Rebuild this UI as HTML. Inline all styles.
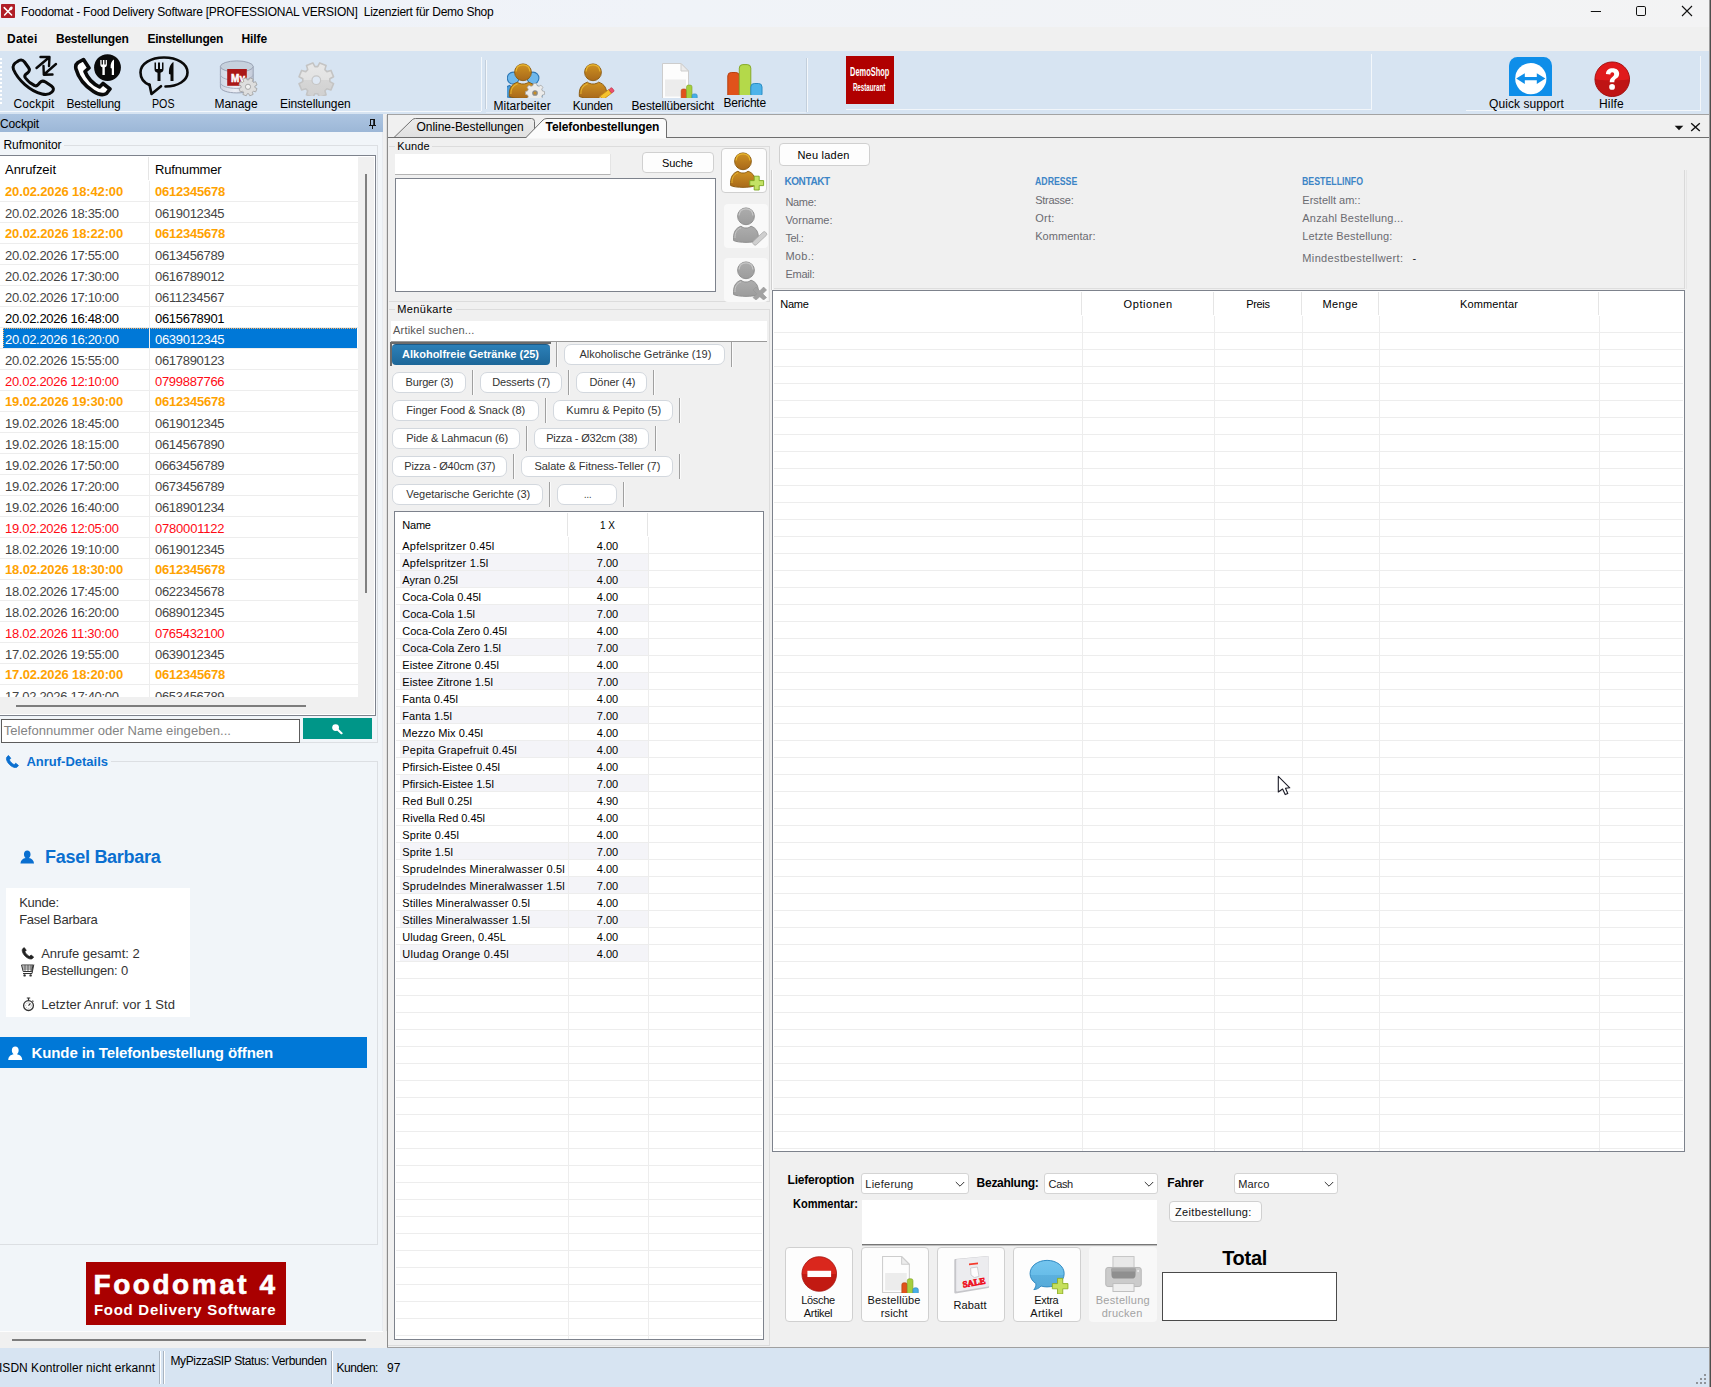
<!DOCTYPE html>
<html><head><meta charset="utf-8"><title>Foodomat</title><style>
html,body{margin:0;padding:0}
body{width:1711px;height:1387px;overflow:hidden;position:relative;background:#f0f0f0;font-family:"Liberation Sans",sans-serif;font-size:12px}
#r div,#r span,#r svg{position:absolute;box-sizing:border-box}
#r span{white-space:pre}
#r{position:absolute;left:0;top:0;width:1711px;height:1387px;overflow:hidden}
</style></head><body><div id="r">
<div style="left:0px;top:0px;width:1711px;height:27px;background:linear-gradient(90deg,#eef2f9 0%,#f0f3f8 40%,#f3f3f4 100%)"></div>
<div style="left:0px;top:27px;width:1711px;height:24px;background:#f0f0f0"></div>
<div style="left:0px;top:51px;width:1709px;height:63px;background:#d7e4f2"></div>
<div style="left:0px;top:111px;width:481px;height:1px;background:#f4f8fc"></div>
<div style="left:486px;top:112px;width:320px;height:1px;background:#e6eef7"></div>
<svg style="left:1px;top:4px" width="14" height="14" viewBox="0 0 14 14"><rect width="14" height="14" rx=".8" fill="#b01e27"/><path d="M3.2 3.6 L10.6 11 M10.2 4 L3.6 11" stroke="#fff" stroke-width="1.5" stroke-linecap="round"/><ellipse cx="9.9" cy="4.4" rx="1.5" ry="2.1" transform="rotate(42 9.9 4.4)" fill="#fff"/></svg>
<span style="left:21.00px;top:4.00px;font-size:12px;line-height:17px;color:#000;letter-spacing:-0.235px;">Foodomat - Food Delivery Software [PROFESSIONAL VERSION]  Lizenziert für Demo Shop</span>
<svg style="left:1590px;top:0" width="110" height="24" viewBox="0 0 110 24"><path d="M0.8 11.5 H11" stroke="#111" stroke-width="1"/><rect x="46.5" y="6.5" width="9" height="9" rx="1.3" fill="none" stroke="#111" stroke-width="1"/><path d="M92 6 L102 16 M102 6 L92 16" stroke="#111" stroke-width="1.1"/></svg>
<span style="left:7.00px;top:31.00px;font-size:12px;line-height:17px;color:#000;font-weight:700;letter-spacing:0.231px;">Datei</span>
<span style="left:56.00px;top:31.00px;font-size:12px;line-height:17px;color:#000;font-weight:700;letter-spacing:-0.238px;">Bestellungen</span>
<span style="left:147.50px;top:31.00px;font-size:12px;line-height:17px;color:#000;font-weight:700;letter-spacing:-0.245px;">Einstellungen</span>
<span style="left:241.50px;top:31.00px;font-size:12px;line-height:17px;color:#000;font-weight:700;letter-spacing:-0.103px;">Hilfe</span>
<div style="left:1709px;top:0px;width:1px;height:1387px;background:#9c9c9c"></div>
<div style="left:1710px;top:0px;width:1px;height:1387px;background:#4d4d4d"></div>
<div style="left:0px;top:58px;width:1.5px;height:2px;background:#fff"></div>
<div style="left:0px;top:62px;width:1.5px;height:2px;background:#fff"></div>
<div style="left:0px;top:66px;width:1.5px;height:2px;background:#fff"></div>
<div style="left:0px;top:70px;width:1.5px;height:2px;background:#fff"></div>
<div style="left:0px;top:74px;width:1.5px;height:2px;background:#fff"></div>
<div style="left:0px;top:78px;width:1.5px;height:2px;background:#fff"></div>
<div style="left:0px;top:82px;width:1.5px;height:2px;background:#fff"></div>
<div style="left:0px;top:86px;width:1.5px;height:2px;background:#fff"></div>
<div style="left:0px;top:90px;width:1.5px;height:2px;background:#fff"></div>
<div style="left:0px;top:94px;width:1.5px;height:2px;background:#fff"></div>
<div style="left:0px;top:98px;width:1.5px;height:2px;background:#fff"></div>
<div style="left:0px;top:102px;width:1.5px;height:2px;background:#fff"></div>
<svg style="left:8px;top:54px" width="52" height="44" viewBox="0 0 52 44">
<path d="M9.5 7.5 C12 5.5 14.5 5.5 16.5 8 L20.5 13.5 C22 15.5 21.5 17.5 19.5 19 L17.5 20.5 C16.5 21.5 16.5 22.5 17.5 24 C20 27.5 23 30 26.5 31.5 C28 32.2 29 32 30 30.8 L32 28.5 C33.5 26.8 35.5 26.8 37.5 28 L43.5 32 C46 33.8 46 36 44 38 C41.5 40.5 38 41 34 40 C22 37 10 26 5.5 15.5 C4.2 12 5.5 9.5 9.5 7.5 Z" fill="none" stroke="#0a0a0a" stroke-width="3" stroke-linejoin="round"/>
<path d="M28.5 14 L41 3.5 M32.5 3 L41.5 3 L41 12" fill="none" stroke="#0a0a0a" stroke-width="2.4" stroke-linecap="round" stroke-linejoin="round"/>
<path d="M48 10 L36 20.5 M35.5 12 L35.8 20.8 L44.5 20.5" fill="none" stroke="#0a0a0a" stroke-width="2.4" stroke-linecap="round" stroke-linejoin="round"/>
</svg>
<span style="left:13.50px;top:96.00px;font-size:12px;line-height:17px;color:#000;letter-spacing:0.141px;">Cockpit</span>
<svg style="left:70px;top:54px" width="54" height="44" viewBox="0 0 54 44">
<path d="M8 8.5 L13.5 5.5 L19 14 L15 17.5 C17.5 24 22.5 29.5 29.5 33 L33 29.5 L40 35 L36.5 39.5 C33 41.5 28 40.5 23.5 37.5 C15 32 8.5 24 6 15 C5.2 12 6 10 8 8.5 Z" fill="#fff" stroke="#0a0a0a" stroke-width="3.6" stroke-linejoin="round"/>
<circle cx="37.5" cy="13.6" r="13.4" fill="#0a0a0a"/>
<g transform="translate(0,-2.6)"><path d="M30.3 8.5 V13 C30.3 15 31.3 15.6 32.4 15.8 V23.5 H34.8 V15.8 C35.9 15.6 36.9 15 36.9 13 V8.5 H35.7 V13 H34.4 V8.5 H32.9 V13 H31.6 V8.5 Z" fill="#fff"/>
<path d="M44 8.2 C41.5 9.5 40.4 12.5 40.6 16.5 L41.8 17 V23.5 H44 Z" fill="#fff"/></g>
</svg>
<span style="left:66.50px;top:96.00px;font-size:12px;line-height:17px;color:#000;letter-spacing:-0.205px;">Bestellung</span>
<svg style="left:138px;top:52.5px" width="52" height="44" viewBox="0 0 52 44">
<path d="M11.5 32 C5.5 29.5 2.5 24.5 2.5 19.5 C2.5 10.5 13 4.5 26 4.5 C39 4.5 49.5 10.5 49.5 19.5 C49.5 27.5 40 33.5 27.5 33.5" fill="none" stroke="#0a0a0a" stroke-width="2.6" stroke-linecap="round"/>
<path d="M11.5 31.5 L13.5 41 L23 33.2" fill="none" stroke="#0a0a0a" stroke-width="2.6" stroke-linejoin="round" stroke-linecap="round"/>
<path d="M16.5 9.5 V16 C16.5 18.6 18 19.4 19.5 19.7 V28 H22.5 V19.7 C24 19.4 25.5 18.6 25.5 16 V9.5 H24 V16 H22 V9.5 H20 V16 H18 V9.5 Z" fill="#0a0a0a"/>
<path d="M35.5 9 C32 11 30.5 15.5 31 21 L32.5 21.6 V28 H35.5 Z" fill="#0a0a0a"/>
</svg>
<span style="left:152.00px;top:96.00px;font-size:12px;line-height:17px;color:#000;transform:scaleX(0.8878);transform-origin:0 50%;">POS</span>
<svg style="left:218px;top:59px" width="42" height="38" viewBox="0 0 42 38">
<defs><linearGradient id="dbg" x1="0" x2="1"><stop offset="0" stop-color="#cfd5e2"/><stop offset=".45" stop-color="#eceff6"/><stop offset="1" stop-color="#c3cad9"/></linearGradient></defs>
<path d="M2.4 7.5 V28 C2.4 31.5 9.7 33.9 18.8 33.9 C27.9 33.9 35.2 31.5 35.2 28 V7.5 Z" fill="url(#dbg)" stroke="#9ba4b6" stroke-width="1"/>
<path d="M2.4 15.5 C2.4 19 9.7 21.4 18.8 21.4 C27.9 21.4 35.2 19 35.2 15.5 M2.4 23.5 C2.4 27 9.7 29.4 18.8 29.4 C27.9 29.4 35.2 27 35.2 23.5" fill="none" stroke="#a7afc0" stroke-width="1"/>
<ellipse cx="18.8" cy="7.5" rx="16.4" ry="5.6" fill="#c6d1dd" stroke="#9ba4b6" stroke-width="1"/>
<rect x="9.2" y="10" width="19.6" height="16.8" fill="#aa1717"/>
<text x="20" y="23" font-family="Liberation Sans" font-weight="700" font-size="10" fill="#fff" stroke="#fff" stroke-width=".5" text-anchor="middle">My</text>
<g transform="translate(30,27.8)"><path d="M0.70 -6.86 L1.79 -9.02 L5.11 -7.65 L4.36 -5.35 L5.35 -4.36 L7.65 -5.11 L9.02 -1.79 L6.86 -0.70 L6.86 0.70 L9.02 1.79 L7.65 5.11 L5.35 4.36 L4.36 5.35 L5.11 7.65 L1.79 9.02 L0.70 6.86 L-0.70 6.86 L-1.79 9.02 L-5.11 7.65 L-4.36 5.35 L-5.35 4.36 L-7.65 5.11 L-9.02 1.79 L-6.86 0.70 L-6.86 -0.70 L-9.02 -1.79 L-7.65 -5.11 L-5.35 -4.36 L-4.36 -5.35 L-5.11 -7.65 L-1.79 -9.02 L-0.70 -6.86 Z" fill="#dedede" stroke="#a5a5a5" stroke-width=".9" stroke-linejoin="round"/><circle cx="0" cy="0" r="2.6" fill="#f3f3f3" stroke="#a9a9a9" stroke-width="1"/></g>
</svg>
<span style="left:214.50px;top:96.00px;font-size:12px;line-height:17px;color:#000;letter-spacing:-0.062px;">Manage</span>
<div style="left:296px;top:60px;width:42px;height:35.6px;overflow:hidden"><svg style="left:0;top:0" width="42" height="42" viewBox="-20.3 -20.2 42 42">
<defs><linearGradient id="gg" x1="0" y1="0" x2="0" y2="1"><stop offset="0" stop-color="#e8e8e8"/><stop offset=".5" stop-color="#e2e2e2"/><stop offset=".5" stop-color="#d6d6d6"/><stop offset="1" stop-color="#d0d0d0"/></linearGradient></defs>
<path d="M1.39 -13.53 L3.43 -17.26 L9.78 -14.63 L8.59 -10.55 L10.55 -8.59 L14.63 -9.78 L17.26 -3.43 L13.53 -1.39 L13.53 1.39 L17.26 3.43 L14.63 9.78 L10.55 8.59 L8.59 10.55 L9.78 14.63 L3.43 17.26 L1.39 13.53 L-1.39 13.53 L-3.43 17.26 L-9.78 14.63 L-8.59 10.55 L-10.55 8.59 L-14.63 9.78 L-17.26 3.43 L-13.53 1.39 L-13.53 -1.39 L-17.26 -3.43 L-14.63 -9.78 L-10.55 -8.59 L-8.59 -10.55 L-9.78 -14.63 L-3.43 -17.26 L-1.39 -13.53 Z" fill="url(#gg)" stroke="#c4c4c4" stroke-width="1.6" stroke-linejoin="round"/>
<circle cx="0" cy="0" r="4.3" fill="#dfe8f3" stroke="#c6c6c6" stroke-width="1.2"/>
</svg></div>
<span style="left:280.00px;top:96.00px;font-size:12px;line-height:17px;color:#000;letter-spacing:-0.120px;">Einstellungen</span>
<div style="left:481px;top:57px;width:1px;height:54px;background:#f3f7fb"></div>
<div style="left:485px;top:60px;width:1px;height:49px;background:#c3cfdc"></div>
<div style="left:486px;top:60px;width:1px;height:49px;background:#f3f7fb"></div>
<div style="left:500px;top:61px;width:50px;height:36.7px;overflow:hidden"><svg style="left:7px;top:2.3px" width="40" height="43.50" viewBox="0 0 40 43.5">
<defs><linearGradient id="pg1" x1="0" y1="0" x2="0" y2="1"><stop offset="0" stop-color="#cf9222"/><stop offset="1" stop-color="#a8691a"/></linearGradient></defs>
<g transform="translate(6.2,8.2) scale(0.74)"><path d="M-12.4 33.5 C-13 25.5 -10.5 21 -5 19.2 C-2.5 21.6 2.5 21.6 5 19.2 C10.5 21 13 25.5 12.4 33.5 C8 36 -8 36 -12.4 33.5 Z" fill="#4a9ad8" stroke="#2e78b6" stroke-width="1.5"/><circle cx="0" cy="9.3" r="8" fill="#6fb8ec" stroke="#2e78b6" stroke-width="1.5"/></g><g transform="translate(26,8.2) scale(0.74)"><path d="M-12.4 33.5 C-13 25.5 -10.5 21 -5 19.2 C-2.5 21.6 2.5 21.6 5 19.2 C10.5 21 13 25.5 12.4 33.5 C8 36 -8 36 -12.4 33.5 Z" fill="#4a9ad8" stroke="#2e78b6" stroke-width="1.5"/><circle cx="0" cy="9.3" r="8" fill="#6fb8ec" stroke="#2e78b6" stroke-width="1.5"/></g><g transform="translate(16,0) scale(1.1,1) translate(-16,0)"><path d="M3.6 33.5 C3 25.5 5.5 21 11 19.2 C13.5 21.6 18.5 21.6 21 19.2 C26.5 21 29 25.5 28.4 33.5 C24 36 8 36 3.6 33.5 Z" fill="url(#pg1)" stroke="#8a5a10" stroke-width=".9"/>
<path d="M5 31 C4.8 26 6.5 22.6 11 20.8" fill="none" stroke="#e6b52e" stroke-width="1"/></g>
<circle cx="16" cy="9.3" r="8.4" fill="url(#pg1)" stroke="#8a5a10" stroke-width=".9"/>
<path d="M9 8.5 C9.4 3.5 13 1.8 16 1.8 C19 1.8 22.6 3.5 23 8.5" fill="none" stroke="#e6b52e" stroke-width="1.3"/>
<g transform="translate(28,28.8)"><path d="M-1.6 -9.4 H1.6 L2.3 -7 L4.4 -6.1 L6.6 -7.4 L8.8 -5 L7.5 -2.9 L8.3 -0.9 L10.6 -0.3 V2.9 L8.3 3.5 L7.5 5.5 L8.8 7.6 L6.6 10 L4.4 8.7 L2.3 9.6 L1.6 12 H-1.6 L-2.3 9.6 L-4.4 8.7 L-6.6 10 L-8.8 7.6 L-7.5 5.5 L-8.3 3.5 L-10.6 2.9 V-0.3 L-8.3 -0.9 L-7.5 -2.9 L-8.8 -5 L-6.6 -7.4 L-4.4 -6.1 L-2.3 -7 Z" fill="#ebebeb" stroke="#a0a0a0" stroke-width=".8" transform="scale(.9)"/><circle cx="0" cy="1.2" r="2.2" fill="#c98d24" stroke="#8a8a8a" stroke-width="1.3"/></g></svg></div>
<span style="left:493.40px;top:98.00px;font-size:12px;line-height:17px;color:#000;letter-spacing:0.065px;">Mitarbeiter</span>
<div style="left:570px;top:61px;width:50px;height:36.7px;overflow:hidden"><svg style="left:6.5px;top:2.3px" width="44" height="43.50" viewBox="0 0 44 43.5">
<defs><linearGradient id="pg2" x1="0" y1="0" x2="0" y2="1"><stop offset="0" stop-color="#cf9222"/><stop offset="1" stop-color="#a8691a"/></linearGradient></defs>
<g transform="translate(16,0) scale(1.1,1) translate(-16,0)"><path d="M3.6 33.5 C3 25.5 5.5 21 11 19.2 C13.5 21.6 18.5 21.6 21 19.2 C26.5 21 29 25.5 28.4 33.5 C24 36 8 36 3.6 33.5 Z" fill="url(#pg2)" stroke="#8a5a10" stroke-width=".9"/>
<path d="M5 31 C4.8 26 6.5 22.6 11 20.8" fill="none" stroke="#e6b52e" stroke-width="1"/></g>
<circle cx="16" cy="9.3" r="8.4" fill="url(#pg2)" stroke="#8a5a10" stroke-width=".9"/>
<path d="M9 8.5 C9.4 3.5 13 1.8 16 1.8 C19 1.8 22.6 3.5 23 8.5" fill="none" stroke="#e6b52e" stroke-width="1.3"/>
<g transform="translate(23.6,35.6) rotate(-37)"><rect x="1" y="-2.3" width="11" height="4.6" fill="#f6c22c" stroke="#c48a12" stroke-width=".7"/><path d="M1 -2.3 L-3.4 0 L1 2.3 Z" fill="#f5deb0" stroke="#c48a12" stroke-width=".5"/><rect x="12" y="-2.3" width="3.6" height="4.6" rx="1" fill="#ee4f6a" stroke="#b92f48" stroke-width=".6"/></g></svg></div>
<span style="left:572.70px;top:98.00px;font-size:12px;line-height:17px;color:#000;letter-spacing:-0.213px;">Kunden</span>
<div style="left:660px;top:62.3px;width:42px;height:35.7px;overflow:hidden"><svg style="left:0px;top:0px" width="40.0" height="37.0" viewBox="0 0 40 37">
<path d="M2.5 1.5 H21 L28.5 9 V36.5 H2.5 Z" fill="#fdfdfd" stroke="#cdcdcd" stroke-width="1"/>
<path d="M21 1.5 V9 H28.5 Z" fill="#ececec" stroke="#cdcdcd" stroke-width="1" stroke-linejoin="round"/>
<rect x="5" y="17.5" width="21" height="17" fill="#ececec"/>
<rect x="21.2" y="27" width="5.3" height="12" rx="1.8" fill="#e0521b" stroke="#b03d0f" stroke-width=".6"/>
<rect x="26.5" y="23.1" width="5.5" height="16" rx="1.8" fill="#a5cf3e" stroke="#7ea125" stroke-width=".6"/>
<rect x="32" y="31.9" width="5.2" height="7" rx="1.8" fill="#48aee6" stroke="#2a86bd" stroke-width=".6"/>
</svg></div>
<span style="left:631.50px;top:98.00px;font-size:12px;line-height:17px;color:#000;letter-spacing:-0.139px;">Bestellübersicht</span>
<svg style="left:726px;top:62px" width="38" height="34" viewBox="0 0 38 34">
<rect x="1.8" y="10.5" width="11.5" height="27" rx="3.5" fill="#e0521b" stroke="#b8410f" stroke-width="1"/>
<rect x="13.3" y="2.6" width="11.5" height="34" rx="3.5" fill="#b4d94a" stroke="#86aa2a" stroke-width="1"/>
<rect x="24.8" y="21.5" width="11.2" height="14" rx="3.5" fill="#4db3ea" stroke="#2b8cc4" stroke-width="1"/>
</svg>
<div style="left:724px;top:95px;width:44px;height:3px;background:#d7e4f2"></div>
<span style="left:723.50px;top:95.00px;font-size:12px;line-height:17px;color:#000;letter-spacing:-0.191px;">Berichte</span>
<div style="left:806px;top:58px;width:1px;height:54px;background:#c3cfdc"></div>
<div style="left:807px;top:58px;width:1px;height:54px;background:#f3f7fb"></div>
<div style="left:846px;top:56px;width:48px;height:48px;background:#b00000"></div>
<span style="left:838.33px;top:64.00px;font-size:12px;line-height:17px;color:#fff;font-weight:700;transform:scaleX(0.6188);transform-origin:50% 50%;">DemoShop</span>
<span style="left:843.08px;top:81.00px;font-size:10px;line-height:14px;color:#fff;font-weight:700;transform:scaleX(0.6220);transform-origin:50% 50%;">Restaurant</span>
<div style="left:1371px;top:54px;width:1px;height:56px;background:#f3f7fb"></div>
<div style="left:846px;top:109px;width:526px;height:1px;background:#f1f5fa"></div>
<div style="left:1700px;top:56px;width:1px;height:54px;background:#f3f7fb"></div>
<div style="left:1466px;top:110px;width:235px;height:1px;background:#f3f7fb"></div>
<svg style="left:1508.5px;top:57px" width="43" height="39" viewBox="0 0 43 39">
<rect x="0" y="0" width="43" height="46" rx="8.5" fill="#0e8ee9"/>
<circle cx="21.8" cy="21.6" r="15.6" fill="#fff"/>
<path d="M7.2 21.6 L15.8 16.2 V19.9 H27.8 V16.2 L36.4 21.6 L27.8 27 V23.3 H15.8 V27 Z" fill="#0e8ee9"/>
</svg>
<span style="left:1489.00px;top:96.00px;font-size:12px;line-height:17px;color:#000;letter-spacing:0.073px;">Quick support</span>
<svg style="left:1593.5px;top:60.5px" width="36.5" height="36.5" viewBox="0 0 38 38">
<circle cx="19" cy="19" r="18" fill="#bf1414" stroke="#9e1010" stroke-width="1"/>
<path d="M1.5 19 A17.5 17.5 0 0 1 36.5 19 C30 20.5 8 20.5 1.5 19 Z" fill="#e01a1c"/>
<path d="M12.4 13.6 C12.6 9.6 15.4 7.6 19.3 7.6 C23.4 7.6 26.2 9.9 26.2 13.2 C26.2 16 24.6 17.3 22.8 18.6 C21.5 19.6 21.2 20.3 21.2 22 H16.4 C16.3 19.3 17.2 18 18.8 16.8 C20.2 15.8 21 15 21 13.7 C21 12.4 20.2 11.7 19.1 11.7 C17.8 11.7 17.1 12.5 17 14 Z" fill="#fff"/>
<circle cx="18.8" cy="27" r="3" fill="#fff"/>
</svg>
<span style="left:1599.00px;top:96.00px;font-size:12px;line-height:17px;color:#000;letter-spacing:0.197px;">Hilfe</span>
<div style="left:0px;top:114px;width:382px;height:1217px;background:#f1f5f9"></div>
<div style="left:382px;top:114px;width:1px;height:1234px;background:#e7ebf0"></div>
<div style="left:383px;top:114px;width:4px;height:1234px;background:#f0f0f0"></div>
<div style="left:386px;top:115px;width:1px;height:1216px;background:#dedede"></div>
<div style="left:0px;top:114px;width:383px;height:18px;background:linear-gradient(#adc5e1,#9cb7d7)"></div>
<span style="left:0.00px;top:116.00px;font-size:12px;line-height:17px;color:#000;letter-spacing:-0.145px;">Cockpit</span>
<svg style="left:369px;top:119px" width="7" height="10" viewBox="0 0 7 10"><path d="M1 0.5 H6 M1.5 0 V6 M5 0 V6 M0 6.5 H7 M3.5 7 V10" stroke="#111" stroke-width="1" fill="none"/><rect x="4.5" y="0" width="1.5" height="6" fill="#111"/></svg>
<span style="left:3.50px;top:137.00px;font-size:12px;line-height:17px;color:#000;letter-spacing:-0.069px;">Rufmonitor</span>
<div style="left:64px;top:145px;width:313px;height:1px;background:#dcdfe3"></div>
<div style="left:377px;top:145px;width:1px;height:598px;background:#dcdfe3"></div>
<div style="left:300px;top:742px;width:78px;height:1px;background:#dcdfe3"></div>
<div style="left:0px;top:155px;width:376px;height:561px;background:#fff;border:1px solid #7d828c;border-left:0"></div>
<div style="left:358px;top:157px;width:16px;height:557px;background:#f0f0f0"></div>
<div style="left:0px;top:697px;width:374px;height:17px;background:#f0f0f0"></div>
<span style="left:5.00px;top:161.00px;font-size:13px;line-height:18px;color:#000;letter-spacing:-0.035px;">Anrufzeit</span>
<span style="left:155.00px;top:161.00px;font-size:13px;line-height:18px;color:#000;letter-spacing:-0.158px;">Rufnummer</span>
<div style="left:148px;top:157px;width:1px;height:23px;background:#e5e5e5"></div>
<div style="left:0;top:156px;width:358px;height:541px;overflow:hidden">
<div style="left:0px;top:45px;width:358px;height:1px;background:#ededed"></div>
<span style="left:5.00px;top:27.00px;font-size:13px;line-height:18px;color:#ffa200;font-weight:700;letter-spacing:-0.143px;">20.02.2026 18:42:00</span>
<span style="left:155.00px;top:27.00px;font-size:13px;line-height:18px;color:#ffa200;font-weight:700;letter-spacing:-0.231px;">0612345678</span>
<div style="left:0px;top:66px;width:358px;height:1px;background:#ededed"></div>
<span style="left:5.00px;top:49.00px;font-size:13px;line-height:18px;color:#444;letter-spacing:-0.294px;">20.02.2026 18:35:00</span>
<span style="left:155.00px;top:49.00px;font-size:13px;line-height:18px;color:#444;letter-spacing:-0.301px;">0619012345</span>
<div style="left:0px;top:87px;width:358px;height:1px;background:#ededed"></div>
<span style="left:5.00px;top:69.00px;font-size:13px;line-height:18px;color:#ffa200;font-weight:700;letter-spacing:-0.143px;">20.02.2026 18:22:00</span>
<span style="left:155.00px;top:69.00px;font-size:13px;line-height:18px;color:#ffa200;font-weight:700;letter-spacing:-0.231px;">0612345678</span>
<div style="left:0px;top:108px;width:358px;height:1px;background:#ededed"></div>
<span style="left:5.00px;top:91.00px;font-size:13px;line-height:18px;color:#444;letter-spacing:-0.294px;">20.02.2026 17:55:00</span>
<span style="left:155.00px;top:91.00px;font-size:13px;line-height:18px;color:#444;letter-spacing:-0.301px;">0613456789</span>
<div style="left:0px;top:129px;width:358px;height:1px;background:#ededed"></div>
<span style="left:5.00px;top:112.00px;font-size:13px;line-height:18px;color:#444;letter-spacing:-0.294px;">20.02.2026 17:30:00</span>
<span style="left:155.00px;top:112.00px;font-size:13px;line-height:18px;color:#444;letter-spacing:-0.301px;">0616789012</span>
<div style="left:0px;top:150px;width:358px;height:1px;background:#ededed"></div>
<span style="left:5.00px;top:133.00px;font-size:13px;line-height:18px;color:#444;letter-spacing:-0.294px;">20.02.2026 17:10:00</span>
<span style="left:155.00px;top:133.00px;font-size:13px;line-height:18px;color:#444;letter-spacing:-0.204px;">0611234567</span>
<div style="left:0px;top:171px;width:358px;height:1px;background:#ededed"></div>
<span style="left:5.00px;top:154.00px;font-size:13px;line-height:18px;color:#000;letter-spacing:-0.294px;">20.02.2026 16:48:00</span>
<span style="left:155.00px;top:154.00px;font-size:13px;line-height:18px;color:#000;letter-spacing:-0.301px;">0615678901</span>
<div style="left:3px;top:172px;width:354px;height:20px;background:#0078d7"></div>
<div style="left:3px;top:172px;width:354px;height:1px;background:repeating-linear-gradient(90deg,#ffb060 0 1px,#0078d7 1px 2px)"></div>
<div style="left:3px;top:172px;width:1px;height:20px;background:repeating-linear-gradient(180deg,#ffb060 0 1px,#0078d7 1px 2px)"></div>
<div style="left:0px;top:192px;width:358px;height:1px;background:#ededed"></div>
<span style="left:5.00px;top:175.00px;font-size:13px;line-height:18px;color:#fff;letter-spacing:-0.294px;">20.02.2026 16:20:00</span>
<span style="left:155.00px;top:175.00px;font-size:13px;line-height:18px;color:#fff;letter-spacing:-0.301px;">0639012345</span>
<div style="left:0px;top:213px;width:358px;height:1px;background:#ededed"></div>
<span style="left:5.00px;top:196.00px;font-size:13px;line-height:18px;color:#444;letter-spacing:-0.294px;">20.02.2026 15:55:00</span>
<span style="left:155.00px;top:196.00px;font-size:13px;line-height:18px;color:#444;letter-spacing:-0.301px;">0617890123</span>
<div style="left:0px;top:234px;width:358px;height:1px;background:#ededed"></div>
<span style="left:5.00px;top:217.00px;font-size:13px;line-height:18px;color:#ff0a14;letter-spacing:-0.294px;">20.02.2026 12:10:00</span>
<span style="left:155.00px;top:217.00px;font-size:13px;line-height:18px;color:#ff0a14;letter-spacing:-0.301px;">0799887766</span>
<div style="left:0px;top:255px;width:358px;height:1px;background:#ededed"></div>
<span style="left:5.00px;top:237.00px;font-size:13px;line-height:18px;color:#ffa200;font-weight:700;letter-spacing:-0.143px;">19.02.2026 19:30:00</span>
<span style="left:155.00px;top:237.00px;font-size:13px;line-height:18px;color:#ffa200;font-weight:700;letter-spacing:-0.231px;">0612345678</span>
<div style="left:0px;top:276px;width:358px;height:1px;background:#ededed"></div>
<span style="left:5.00px;top:259.00px;font-size:13px;line-height:18px;color:#444;letter-spacing:-0.294px;">19.02.2026 18:45:00</span>
<span style="left:155.00px;top:259.00px;font-size:13px;line-height:18px;color:#444;letter-spacing:-0.301px;">0619012345</span>
<div style="left:0px;top:297px;width:358px;height:1px;background:#ededed"></div>
<span style="left:5.00px;top:280.00px;font-size:13px;line-height:18px;color:#444;letter-spacing:-0.294px;">19.02.2026 18:15:00</span>
<span style="left:155.00px;top:280.00px;font-size:13px;line-height:18px;color:#444;letter-spacing:-0.301px;">0614567890</span>
<div style="left:0px;top:318px;width:358px;height:1px;background:#ededed"></div>
<span style="left:5.00px;top:301.00px;font-size:13px;line-height:18px;color:#444;letter-spacing:-0.294px;">19.02.2026 17:50:00</span>
<span style="left:155.00px;top:301.00px;font-size:13px;line-height:18px;color:#444;letter-spacing:-0.301px;">0663456789</span>
<div style="left:0px;top:339px;width:358px;height:1px;background:#ededed"></div>
<span style="left:5.00px;top:322.00px;font-size:13px;line-height:18px;color:#444;letter-spacing:-0.294px;">19.02.2026 17:20:00</span>
<span style="left:155.00px;top:322.00px;font-size:13px;line-height:18px;color:#444;letter-spacing:-0.301px;">0673456789</span>
<div style="left:0px;top:360px;width:358px;height:1px;background:#ededed"></div>
<span style="left:5.00px;top:343.00px;font-size:13px;line-height:18px;color:#444;letter-spacing:-0.294px;">19.02.2026 16:40:00</span>
<span style="left:155.00px;top:343.00px;font-size:13px;line-height:18px;color:#444;letter-spacing:-0.301px;">0618901234</span>
<div style="left:0px;top:381px;width:358px;height:1px;background:#ededed"></div>
<span style="left:5.00px;top:364.00px;font-size:13px;line-height:18px;color:#ff0a14;letter-spacing:-0.294px;">19.02.2026 12:05:00</span>
<span style="left:155.00px;top:364.00px;font-size:13px;line-height:18px;color:#ff0a14;letter-spacing:-0.204px;">0780001122</span>
<div style="left:0px;top:402px;width:358px;height:1px;background:#ededed"></div>
<span style="left:5.00px;top:385.00px;font-size:13px;line-height:18px;color:#444;letter-spacing:-0.294px;">18.02.2026 19:10:00</span>
<span style="left:155.00px;top:385.00px;font-size:13px;line-height:18px;color:#444;letter-spacing:-0.301px;">0619012345</span>
<div style="left:0px;top:423px;width:358px;height:1px;background:#ededed"></div>
<span style="left:5.00px;top:405.00px;font-size:13px;line-height:18px;color:#ffa200;font-weight:700;letter-spacing:-0.143px;">18.02.2026 18:30:00</span>
<span style="left:155.00px;top:405.00px;font-size:13px;line-height:18px;color:#ffa200;font-weight:700;letter-spacing:-0.231px;">0612345678</span>
<div style="left:0px;top:444px;width:358px;height:1px;background:#ededed"></div>
<span style="left:5.00px;top:427.00px;font-size:13px;line-height:18px;color:#444;letter-spacing:-0.294px;">18.02.2026 17:45:00</span>
<span style="left:155.00px;top:427.00px;font-size:13px;line-height:18px;color:#444;letter-spacing:-0.301px;">0622345678</span>
<div style="left:0px;top:465px;width:358px;height:1px;background:#ededed"></div>
<span style="left:5.00px;top:448.00px;font-size:13px;line-height:18px;color:#444;letter-spacing:-0.294px;">18.02.2026 16:20:00</span>
<span style="left:155.00px;top:448.00px;font-size:13px;line-height:18px;color:#444;letter-spacing:-0.301px;">0689012345</span>
<div style="left:0px;top:486px;width:358px;height:1px;background:#ededed"></div>
<span style="left:5.00px;top:469.00px;font-size:13px;line-height:18px;color:#ff0a14;letter-spacing:-0.244px;">18.02.2026 11:30:00</span>
<span style="left:155.00px;top:469.00px;font-size:13px;line-height:18px;color:#ff0a14;letter-spacing:-0.301px;">0765432100</span>
<div style="left:0px;top:507px;width:358px;height:1px;background:#ededed"></div>
<span style="left:5.00px;top:490.00px;font-size:13px;line-height:18px;color:#444;letter-spacing:-0.294px;">17.02.2026 19:55:00</span>
<span style="left:155.00px;top:490.00px;font-size:13px;line-height:18px;color:#444;letter-spacing:-0.301px;">0639012345</span>
<div style="left:0px;top:528px;width:358px;height:1px;background:#ededed"></div>
<span style="left:5.00px;top:510.00px;font-size:13px;line-height:18px;color:#ffa200;font-weight:700;letter-spacing:-0.143px;">17.02.2026 18:20:00</span>
<span style="left:155.00px;top:510.00px;font-size:13px;line-height:18px;color:#ffa200;font-weight:700;letter-spacing:-0.231px;">0612345678</span>
<div style="left:0px;top:549px;width:358px;height:1px;background:#ededed"></div>
<span style="left:5.00px;top:532.00px;font-size:13px;line-height:18px;color:#444;letter-spacing:-0.294px;">17.02.2026 17:40:00</span>
<span style="left:155.00px;top:532.00px;font-size:13px;line-height:18px;color:#444;letter-spacing:-0.301px;">0653456789</span>
<div style="left:149px;top:25px;width:1px;height:520px;background:#ededed"></div>
</div>
<div style="left:365px;top:174px;width:2px;height:419px;background:#808080"></div>
<div style="left:16px;top:705px;width:290px;height:2px;background:#7d7d7d"></div>
<div style="left:1px;top:719px;width:299px;height:24px;background:#fff;border:1px solid #5c5c5c"></div>
<span style="left:3.80px;top:722.00px;font-size:13px;line-height:18px;color:#838383;letter-spacing:0.049px;">Telefonnummer oder Name eingeben...</span>
<div style="left:303px;top:718px;width:69px;height:21px;background:#009688"></div>
<svg style="left:331px;top:723px" width="12" height="12" viewBox="0 0 12 12"><circle cx="4.6" cy="4.6" r="3.4" fill="#fff"/><path d="M6.8 6.8 L10.5 10.2" stroke="#fff" stroke-width="2.2" stroke-linecap="round"/></svg>
<svg style="left:5px;top:754.5px" width="14.5" height="13.5" viewBox="0 0 14 14"><path d="M3.2 0.6 C2 1.3 1 2.3 1 3.6 C1.2 8 6 12.8 10.4 13 C11.7 13 12.7 12 13.4 10.8 L10.6 8.6 L9 10 C7 9.3 4.7 7 4 5 L5.4 3.4 Z" fill="#0a6fd0" stroke="#0a6fd0" stroke-width=".9" stroke-linejoin="round"/></svg>
<span style="left:26.40px;top:753.00px;font-size:13px;line-height:18px;color:#0a6fd0;font-weight:700;">Anruf-Details</span>
<div style="left:111px;top:761px;width:266px;height:1px;background:#dcdfe3"></div>
<div style="left:377px;top:761px;width:1px;height:483px;background:#dcdfe3"></div>
<div style="left:0px;top:1244px;width:378px;height:1px;background:#dcdfe3"></div>
<svg style="left:20px;top:850px" width="14.5" height="14" viewBox="0 0 14 14"><path d="M7 0.5 C9 0.5 10.3 2 10.3 4.2 C10.3 6 9.5 7.4 8.6 8 C11.5 8.6 13.5 10 13.8 13.5 H0.2 C0.5 10 2.5 8.6 5.4 8 C4.5 7.4 3.7 6 3.7 4.2 C3.7 2 5 0.5 7 0.5 Z" fill="#0a6fd0"/></svg>
<span style="left:45.00px;top:845.00px;font-size:18px;line-height:25px;color:#0a6fd0;font-weight:700;letter-spacing:-0.275px;">Fasel Barbara</span>
<div style="left:6px;top:888px;width:184px;height:129px;background:#fff"></div>
<span style="left:19.20px;top:894.00px;font-size:13px;line-height:18px;color:#333;letter-spacing:-0.234px;">Kunde:</span>
<span style="left:19.20px;top:911.00px;font-size:13px;line-height:18px;color:#333;letter-spacing:-0.258px;">Fasel Barbara</span>
<svg style="left:21px;top:947px" width="13.5" height="13" viewBox="0 0 14 14"><path d="M3.2 0.6 C2 1.3 1 2.3 1 3.6 C1.2 8 6 12.8 10.4 13 C11.7 13 12.7 12 13.4 10.8 L10.6 8.6 L9 10 C7 9.3 4.7 7 4 5 L5.4 3.4 Z" fill="#222" stroke="#222" stroke-width=".7" stroke-linejoin="round"/></svg>
<span style="left:41.20px;top:945.00px;font-size:13px;line-height:18px;color:#333;letter-spacing:-0.038px;">Anrufe gesamt: 2</span>
<svg style="left:21px;top:964px" width="14" height="13" viewBox="0 0 14 13"><path d="M0.5 1 H12 L10.8 7.5 H2.2 Z" fill="none" stroke="#333" stroke-width="1"/><path d="M1 3 H11.6 M1.4 5 H11.2 M4 1 V7.5 M7 1 V7.5 M10 1 V7.5" stroke="#333" stroke-width=".7"/><path d="M12.8 0.5 L11 9.5 H2" fill="none" stroke="#333" stroke-width="1"/><circle cx="3.6" cy="11.4" r="1.2" fill="#333"/><circle cx="9.6" cy="11.4" r="1.2" fill="#333"/></svg>
<span style="left:41.20px;top:962.00px;font-size:13px;line-height:18px;color:#333;letter-spacing:-0.188px;">Bestellungen: 0</span>
<svg style="left:21.5px;top:997px" width="13" height="15" viewBox="0 0 13 15"><circle cx="6.5" cy="8.6" r="4.9" fill="#fff" stroke="#333" stroke-width="1.3"/><path d="M4.8 1 H8.2 M6.5 1 V3.4 M10.4 3.6 L11.4 4.6 M6.5 8.6 L8.4 6.4" stroke="#333" stroke-width="1.2" fill="none"/><circle cx="6.5" cy="8.6" r="2.8" fill="none" stroke="#777" stroke-width=".6" stroke-dasharray="1 1"/></svg>
<span style="left:41.20px;top:996.00px;font-size:13px;line-height:18px;color:#333;letter-spacing:0.035px;">Letzter Anruf: vor 1 Std</span>
<div style="left:0px;top:1037px;width:367px;height:31px;background:#0078d7"></div>
<svg style="left:8px;top:1045.5px" width="14.5" height="14.5" viewBox="0 0 14 14"><path d="M7 0.5 C9 0.5 10.3 2 10.3 4.2 C10.3 6 9.5 7.4 8.6 8 C11.5 8.6 13.5 10 13.8 13.5 H0.2 C0.5 10 2.5 8.6 5.4 8 C4.5 7.4 3.7 6 3.7 4.2 C3.7 2 5 0.5 7 0.5 Z" fill="#fff"/></svg>
<span style="left:31.60px;top:1042.00px;font-size:15px;line-height:21px;color:#fff;font-weight:700;letter-spacing:-0.126px;">Kunde in Telefonbestellung öffnen</span>
<div style="left:86px;top:1262px;width:200px;height:63px;background:#a90000"></div>
<span style="left:93.60px;top:1265.00px;font-size:28px;line-height:39px;color:#fff;font-weight:700;letter-spacing:2.523px;-webkit-text-stroke:0.6px #fff;">Foodomat 4</span>
<span style="left:94.00px;top:1299.00px;font-size:15px;line-height:21px;color:#fff;font-weight:700;letter-spacing:0.708px;">Food Delivery Software</span>
<div style="left:0px;top:1331px;width:387px;height:17px;background:#f0f0f0"></div>
<div style="left:0px;top:1331px;width:383px;height:1px;background:#fdfdfd"></div>
<div style="left:12px;top:1339px;width:354px;height:2px;background:#7d7d7d"></div>
<div style="left:387px;top:114px;width:1322px;height:1234px;background:#f0f0f0"></div>
<div style="left:387px;top:114px;width:1322px;height:1px;background:#a3a3a3"></div>
<div style="left:387px;top:114px;width:1px;height:1233px;background:#8c8c8c"></div>
<div style="left:388px;top:137px;width:1321px;height:1px;background:#6e6e6e"></div>
<svg style="left:388px;top:116px" width="290" height="23" viewBox="388 116 290 23">
<defs><linearGradient id="tg" x1="0" y1="0" x2="0" y2="1"><stop offset="0" stop-color="#ececec"/><stop offset="1" stop-color="#e0e0e0"/></linearGradient></defs>
<path d="M394 137.5 L412.5 119.5 Q413.8 118.5 415.5 118.5 H531.5 Q534.5 118.5 534.5 121.5 V137.5 Z" fill="url(#tg)" stroke="#6e6e6e" stroke-width="1"/>
<path d="M525.5 138.5 L543 120 Q544.5 118.5 547 118.5 H663 Q666.5 118.5 666.5 122 V138.5 Z" fill="#fbfbfb"/>
<path d="M526 137.5 L543 120 Q544.5 118.5 547 118.5 H663 Q666.5 118.5 666.5 122 V138" fill="none" stroke="#6e6e6e" stroke-width="1"/>
</svg>
<span style="left:416.60px;top:119.00px;font-size:12px;line-height:17px;color:#000;letter-spacing:-0.057px;">Online-Bestellungen</span>
<span style="left:545.60px;top:119.00px;font-size:12px;line-height:17px;color:#000;font-weight:700;letter-spacing:-0.110px;">Telefonbestellungen</span>
<svg style="left:1673px;top:121px" width="30" height="12" viewBox="0 0 30 12"><path d="M1.7 4.7 H10.3 L6 9.2 Z" fill="#111"/><path d="M18.2 2.3 L26.8 9.9 M26.8 2.3 L18.2 9.9" stroke="#111" stroke-width="1.4"/></svg>
<span style="left:397.30px;top:139.00px;font-size:11px;line-height:15px;color:#000;letter-spacing:0.098px;">Kunde</span>
<div style="left:432px;top:146px;width:337px;height:1px;background:#dcdcdc"></div>
<div style="left:769px;top:146px;width:1px;height:156px;background:#dcdcdc"></div>
<div style="left:389px;top:146px;width:6px;height:1px;background:#dcdcdc"></div>
<div style="left:389px;top:301px;width:381px;height:1px;background:#dcdcdc"></div>
<div style="left:395px;top:154px;width:216px;height:21px;background:#fff;border-bottom:1px solid #b4b4b4;border-right:1px solid #e4e4e4"></div>
<div style="left:642px;top:152px;width:72px;height:21px;background:#fdfdfd;border:1px solid #d0d0d0;border-radius:4px"></div>
<span style="left:662.10px;top:156.00px;font-size:11px;line-height:15px;color:#000;letter-spacing:-0.101px;">Suche</span>
<div style="left:395px;top:178px;width:321px;height:114px;background:#fff;border:1px solid #7d828c"></div>
<div style="left:721px;top:148px;width:46px;height:45px;background:#fdfdfd;border:1px solid #d0d0d0;border-radius:4px"></div>
<div style="left:724px;top:204px;width:44px;height:43.5px;background:#f9f9f9;border-radius:4px"></div>
<div style="left:724px;top:258px;width:44px;height:43.5px;background:#f9f9f9;border-radius:4px"></div>
<svg style="left:727px;top:152px" width="38" height="39.00" viewBox="0 0 38 39">
<defs><linearGradient id="pg3" x1="0" y1="0" x2="0" y2="1"><stop offset="0" stop-color="#cf9222"/><stop offset="1" stop-color="#a8691a"/></linearGradient></defs>
<g transform="translate(16,0) scale(1.0,1) translate(-16,0)"><path d="M3.6 33.5 C3 25.5 5.5 21 11 19.2 C13.5 21.6 18.5 21.6 21 19.2 C26.5 21 29 25.5 28.4 33.5 C24 36 8 36 3.6 33.5 Z" fill="url(#pg3)" stroke="#8a5a10" stroke-width=".9"/>
<path d="M5 31 C4.8 26 6.5 22.6 11 20.8" fill="none" stroke="#e6b52e" stroke-width="1"/></g>
<circle cx="16" cy="9.3" r="8.4" fill="url(#pg3)" stroke="#8a5a10" stroke-width=".9"/>
<path d="M9 8.5 C9.4 3.5 13 1.8 16 1.8 C19 1.8 22.6 3.5 23 8.5" fill="none" stroke="#e6b52e" stroke-width="1.3"/>
<path d="M22.8 28.6 h4.4 v-4.4 h5 v4.4 h4.4 v5 h-4.4 v4.4 h-5 v-4.4 h-4.4 Z" fill="#c3e265" stroke="#7aa51f" stroke-width=".9"/></svg>
<svg style="left:729.5px;top:207px" width="38" height="39.00" viewBox="0 0 38 39">
<defs><linearGradient id="pg4" x1="0" y1="0" x2="0" y2="1"><stop offset="0" stop-color="#adadad"/><stop offset="1" stop-color="#9c9c9c"/></linearGradient></defs>
<g transform="translate(16,0) scale(1.0,1) translate(-16,0)"><path d="M3.6 33.5 C3 25.5 5.5 21 11 19.2 C13.5 21.6 18.5 21.6 21 19.2 C26.5 21 29 25.5 28.4 33.5 C24 36 8 36 3.6 33.5 Z" fill="url(#pg4)" stroke="#8b8b8b" stroke-width=".9"/>
<path d="M5 31 C4.8 26 6.5 22.6 11 20.8" fill="none" stroke="#c6c6c6" stroke-width="1"/></g>
<circle cx="16" cy="9.3" r="8.4" fill="url(#pg4)" stroke="#8b8b8b" stroke-width=".9"/>
<path d="M9 8.5 C9.4 3.5 13 1.8 16 1.8 C19 1.8 22.6 3.5 23 8.5" fill="none" stroke="#c6c6c6" stroke-width="1.3"/>
<g transform="translate(23.5,37.2) rotate(-43)"><rect x="0" y="-2.3" width="17" height="4.6" rx="1.8" fill="#cfcfcf" stroke="#a9a9a9" stroke-width=".7"/></g></svg>
<svg style="left:729.5px;top:261px" width="38" height="39.00" viewBox="0 0 38 39">
<defs><linearGradient id="pg5" x1="0" y1="0" x2="0" y2="1"><stop offset="0" stop-color="#adadad"/><stop offset="1" stop-color="#9c9c9c"/></linearGradient></defs>
<g transform="translate(16,0) scale(1.0,1) translate(-16,0)"><path d="M3.6 33.5 C3 25.5 5.5 21 11 19.2 C13.5 21.6 18.5 21.6 21 19.2 C26.5 21 29 25.5 28.4 33.5 C24 36 8 36 3.6 33.5 Z" fill="url(#pg5)" stroke="#8b8b8b" stroke-width=".9"/>
<path d="M5 31 C4.8 26 6.5 22.6 11 20.8" fill="none" stroke="#c6c6c6" stroke-width="1"/></g>
<circle cx="16" cy="9.3" r="8.4" fill="url(#pg5)" stroke="#8b8b8b" stroke-width=".9"/>
<path d="M9 8.5 C9.4 3.5 13 1.8 16 1.8 C19 1.8 22.6 3.5 23 8.5" fill="none" stroke="#c6c6c6" stroke-width="1.3"/>
<path d="M23 29 L26 26 L29.8 29.8 L33.6 26 L36.6 29 L32.8 32.8 L36.6 36.6 L33.6 39 L29.8 35.8 L26 39 L23 36.6 L26.8 32.8 Z" fill="#a2a2a2" stroke="#959595" stroke-width=".5"/></svg>
<span style="left:397.30px;top:302.00px;font-size:11px;line-height:15px;color:#000;letter-spacing:0.391px;">Menükarte</span>
<div style="left:456px;top:309px;width:313px;height:1px;background:#dcdcdc"></div>
<div style="left:769px;top:309px;width:1px;height:1036px;background:#dcdcdc"></div>
<div style="left:389px;top:309px;width:6px;height:1px;background:#dcdcdc"></div>
<div style="left:391px;top:321px;width:376px;height:20px;background:#fff"></div>
<div style="left:391px;top:341px;width:376px;height:1px;background:#9a9a9a"></div>
<span style="left:393.10px;top:323.00px;font-size:11px;line-height:15px;color:#555;letter-spacing:0.184px;">Artikel suchen...</span>
<div style="left:390px;top:342px;width:161px;height:2px;background:#6b6b6b"></div>
<div style="left:390px;top:342px;width:2px;height:24px;background:#6b6b6b"></div>
<div style="left:392.3px;top:344.4px;width:157.90000000000003px;height:20.6px;background:linear-gradient(#2c80b8,#1d6799);border-radius:4px;border-top:1px solid #1b5b8a"></div>
<span style="left:402.10px;top:347.00px;font-size:11px;line-height:15px;color:#fff;font-weight:700;">Alkoholfreie Getränke (25)</span>
<div style="left:556px;top:342px;width:1px;height:25px;background:#a0a0a0"></div>
<div style="left:557px;top:342px;width:1px;height:25px;background:#fbfbfb"></div>
<div style="left:564.3px;top:344.4px;width:160.70000000000005px;height:20.4px;background:#fff;border:1px solid #d3d8de;border-radius:7px"></div>
<span style="left:579.50px;top:347.00px;font-size:11px;line-height:15px;color:#333;letter-spacing:-0.034px;">Alkoholische Getränke (19)</span>
<div style="left:731px;top:342px;width:1px;height:25px;background:#a0a0a0"></div>
<div style="left:732px;top:342px;width:1px;height:25px;background:#fbfbfb"></div>
<div style="left:392.3px;top:372.4px;width:73.89999999999998px;height:20.4px;background:#fff;border:1px solid #d3d8de;border-radius:7px"></div>
<span style="left:405.60px;top:375.00px;font-size:11px;line-height:15px;color:#333;letter-spacing:-0.183px;">Burger (3)</span>
<div style="left:472px;top:370px;width:1px;height:25px;background:#a0a0a0"></div>
<div style="left:473px;top:370px;width:1px;height:25px;background:#fbfbfb"></div>
<div style="left:480.4px;top:372.4px;width:81.60000000000002px;height:20.4px;background:#fff;border:1px solid #d3d8de;border-radius:7px"></div>
<span style="left:492.30px;top:375.00px;font-size:11px;line-height:15px;color:#333;letter-spacing:-0.176px;">Desserts (7)</span>
<div style="left:568px;top:370px;width:1px;height:25px;background:#a0a0a0"></div>
<div style="left:569px;top:370px;width:1px;height:25px;background:#fbfbfb"></div>
<div style="left:576.4px;top:372.4px;width:70.89999999999998px;height:20.4px;background:#fff;border:1px solid #d3d8de;border-radius:7px"></div>
<span style="left:589.50px;top:375.00px;font-size:11px;line-height:15px;color:#333;letter-spacing:-0.074px;">Döner (4)</span>
<div style="left:653px;top:370px;width:1px;height:25px;background:#a0a0a0"></div>
<div style="left:654px;top:370px;width:1px;height:25px;background:#fbfbfb"></div>
<div style="left:392.3px;top:400.4px;width:146.99999999999994px;height:20.4px;background:#fff;border:1px solid #d3d8de;border-radius:7px"></div>
<span style="left:406.30px;top:403.00px;font-size:11px;line-height:15px;color:#333;letter-spacing:-0.041px;">Finger Food &amp; Snack (8)</span>
<div style="left:545px;top:398px;width:1px;height:25px;background:#a0a0a0"></div>
<div style="left:546px;top:398px;width:1px;height:25px;background:#fbfbfb"></div>
<div style="left:553px;top:400.4px;width:120px;height:20.4px;background:#fff;border:1px solid #d3d8de;border-radius:7px"></div>
<span style="left:566.30px;top:403.00px;font-size:11px;line-height:15px;color:#333;letter-spacing:0.081px;">Kumru &amp; Pepito (5)</span>
<div style="left:679px;top:398px;width:1px;height:25px;background:#a0a0a0"></div>
<div style="left:680px;top:398px;width:1px;height:25px;background:#fbfbfb"></div>
<div style="left:392.3px;top:428.4px;width:127.99999999999994px;height:20.4px;background:#fff;border:1px solid #d3d8de;border-radius:7px"></div>
<span style="left:406.30px;top:431.00px;font-size:11px;line-height:15px;color:#333;letter-spacing:-0.076px;">Pide &amp; Lahmacun (6)</span>
<div style="left:526px;top:426px;width:1px;height:25px;background:#a0a0a0"></div>
<div style="left:527px;top:426px;width:1px;height:25px;background:#fbfbfb"></div>
<div style="left:534.4px;top:428.4px;width:114.89999999999998px;height:20.4px;background:#fff;border:1px solid #d3d8de;border-radius:7px"></div>
<span style="left:546.20px;top:431.00px;font-size:11px;line-height:15px;color:#333;letter-spacing:-0.214px;">Pizza - Ø32cm (38)</span>
<div style="left:655px;top:426px;width:1px;height:25px;background:#a0a0a0"></div>
<div style="left:656px;top:426px;width:1px;height:25px;background:#fbfbfb"></div>
<div style="left:392.3px;top:456.4px;width:115.0px;height:20.4px;background:#fff;border:1px solid #d3d8de;border-radius:7px"></div>
<span style="left:404.30px;top:459.00px;font-size:11px;line-height:15px;color:#333;letter-spacing:-0.214px;">Pizza - Ø40cm (37)</span>
<div style="left:513px;top:454px;width:1px;height:25px;background:#a0a0a0"></div>
<div style="left:514px;top:454px;width:1px;height:25px;background:#fbfbfb"></div>
<div style="left:521.3px;top:456.4px;width:151.70000000000005px;height:20.4px;background:#fff;border:1px solid #d3d8de;border-radius:7px"></div>
<span style="left:534.40px;top:459.00px;font-size:11px;line-height:15px;color:#333;letter-spacing:-0.024px;">Salate &amp; Fitness-Teller (7)</span>
<div style="left:679px;top:454px;width:1px;height:25px;background:#a0a0a0"></div>
<div style="left:680px;top:454px;width:1px;height:25px;background:#fbfbfb"></div>
<div style="left:392.3px;top:484.4px;width:151.09999999999997px;height:20.4px;background:#fff;border:1px solid #d3d8de;border-radius:7px"></div>
<span style="left:406.30px;top:487.00px;font-size:11px;line-height:15px;color:#333;letter-spacing:-0.037px;">Vegetarische Gerichte (3)</span>
<div style="left:549px;top:482px;width:1px;height:25px;background:#a0a0a0"></div>
<div style="left:550px;top:482px;width:1px;height:25px;background:#fbfbfb"></div>
<div style="left:557px;top:484.4px;width:60.200000000000045px;height:20.4px;background:#fff;border:1px solid #d3d8de;border-radius:7px"></div>
<span style="left:583.50px;top:487.00px;font-size:11px;line-height:15px;color:#333;transform:scaleX(0.8177);transform-origin:0 50%;">...</span>
<div style="left:623px;top:482px;width:1px;height:25px;background:#a0a0a0"></div>
<div style="left:624px;top:482px;width:1px;height:25px;background:#fbfbfb"></div>
<div style="left:394px;top:511px;width:370px;height:829px;background:#fff;border:1px solid #7d828c"></div>
<span style="left:402.30px;top:518.00px;font-size:11px;line-height:15px;color:#000;letter-spacing:-0.236px;">Name</span>
<span style="left:600.30px;top:518.00px;font-size:11px;line-height:15px;color:#000;transform:scaleX(0.9022);transform-origin:0 50%;">1 X</span>
<div style="left:567px;top:513px;width:1px;height:23px;background:#e5e5e5"></div>
<div style="left:647px;top:513px;width:1px;height:23px;background:#e5e5e5"></div>
<div style="left:396px;top:553px;width:366px;height:1px;background:#ededed"></div>
<span style="left:402.30px;top:539.00px;font-size:11px;line-height:15px;color:#000;letter-spacing:0.219px;">Apfelspritzer 0.45l</span>
<span style="left:596.80px;top:539.00px;font-size:11px;line-height:15px;color:#000;letter-spacing:-0.005px;">4.00</span>
<div style="left:400px;top:554px;width:248px;height:16px;background:#f4f4f8"></div>
<div style="left:396px;top:570px;width:366px;height:1px;background:#ededed"></div>
<span style="left:402.30px;top:556.00px;font-size:11px;line-height:15px;color:#000;letter-spacing:0.237px;">Apfelspritzer 1.5l</span>
<span style="left:596.80px;top:556.00px;font-size:11px;line-height:15px;color:#000;letter-spacing:-0.005px;">7.00</span>
<div style="left:400px;top:571px;width:248px;height:16px;background:#f4f4f8"></div>
<div style="left:396px;top:587px;width:366px;height:1px;background:#ededed"></div>
<span style="left:402.30px;top:573.00px;font-size:11px;line-height:15px;color:#000;letter-spacing:0.022px;">Ayran 0.25l</span>
<span style="left:596.80px;top:573.00px;font-size:11px;line-height:15px;color:#000;letter-spacing:-0.005px;">4.00</span>
<div style="left:396px;top:604px;width:366px;height:1px;background:#ededed"></div>
<span style="left:402.30px;top:590.00px;font-size:11px;line-height:15px;color:#000;letter-spacing:-0.012px;">Coca-Cola 0.45l</span>
<span style="left:596.80px;top:590.00px;font-size:11px;line-height:15px;color:#000;letter-spacing:-0.005px;">4.00</span>
<div style="left:400px;top:605px;width:248px;height:16px;background:#f4f4f8"></div>
<div style="left:396px;top:621px;width:366px;height:1px;background:#ededed"></div>
<span style="left:402.30px;top:607.00px;font-size:11px;line-height:15px;color:#000;letter-spacing:-0.005px;">Coca-Cola 1.5l</span>
<span style="left:596.80px;top:607.00px;font-size:11px;line-height:15px;color:#000;letter-spacing:-0.005px;">7.00</span>
<div style="left:396px;top:638px;width:366px;height:1px;background:#ededed"></div>
<span style="left:402.30px;top:624.00px;font-size:11px;line-height:15px;color:#000;letter-spacing:0.007px;">Coca-Cola Zero 0.45l</span>
<span style="left:596.80px;top:624.00px;font-size:11px;line-height:15px;color:#000;letter-spacing:-0.005px;">4.00</span>
<div style="left:400px;top:639px;width:248px;height:16px;background:#f4f4f8"></div>
<div style="left:396px;top:655px;width:366px;height:1px;background:#ededed"></div>
<span style="left:402.30px;top:641.00px;font-size:11px;line-height:15px;color:#000;letter-spacing:0.014px;">Coca-Cola Zero 1.5l</span>
<span style="left:596.80px;top:641.00px;font-size:11px;line-height:15px;color:#000;letter-spacing:-0.005px;">7.00</span>
<div style="left:396px;top:672px;width:366px;height:1px;background:#ededed"></div>
<span style="left:402.30px;top:658.00px;font-size:11px;line-height:15px;color:#000;letter-spacing:0.096px;">Eistee Zitrone 0.45l</span>
<span style="left:596.80px;top:658.00px;font-size:11px;line-height:15px;color:#000;letter-spacing:-0.005px;">4.00</span>
<div style="left:400px;top:673px;width:248px;height:16px;background:#f4f4f8"></div>
<div style="left:396px;top:689px;width:366px;height:1px;background:#ededed"></div>
<span style="left:402.30px;top:675.00px;font-size:11px;line-height:15px;color:#000;letter-spacing:0.108px;">Eistee Zitrone 1.5l</span>
<span style="left:596.80px;top:675.00px;font-size:11px;line-height:15px;color:#000;letter-spacing:-0.005px;">7.00</span>
<div style="left:396px;top:706px;width:366px;height:1px;background:#ededed"></div>
<span style="left:402.30px;top:692.00px;font-size:11px;line-height:15px;color:#000;letter-spacing:0.059px;">Fanta 0.45l</span>
<span style="left:596.80px;top:692.00px;font-size:11px;line-height:15px;color:#000;letter-spacing:-0.005px;">4.00</span>
<div style="left:400px;top:707px;width:248px;height:16px;background:#f4f4f8"></div>
<div style="left:396px;top:723px;width:366px;height:1px;background:#ededed"></div>
<span style="left:402.30px;top:709.00px;font-size:11px;line-height:15px;color:#000;letter-spacing:0.078px;">Fanta 1.5l</span>
<span style="left:596.80px;top:709.00px;font-size:11px;line-height:15px;color:#000;letter-spacing:-0.005px;">7.00</span>
<div style="left:396px;top:740px;width:366px;height:1px;background:#ededed"></div>
<span style="left:402.30px;top:726.00px;font-size:11px;line-height:15px;color:#000;letter-spacing:0.081px;">Mezzo Mix 0.45l</span>
<span style="left:596.80px;top:726.00px;font-size:11px;line-height:15px;color:#000;letter-spacing:-0.005px;">4.00</span>
<div style="left:400px;top:741px;width:248px;height:16px;background:#f4f4f8"></div>
<div style="left:396px;top:757px;width:366px;height:1px;background:#ededed"></div>
<span style="left:402.30px;top:743.00px;font-size:11px;line-height:15px;color:#000;letter-spacing:0.201px;">Pepita Grapefruit 0.45l</span>
<span style="left:596.80px;top:743.00px;font-size:11px;line-height:15px;color:#000;letter-spacing:-0.005px;">4.00</span>
<div style="left:396px;top:774px;width:366px;height:1px;background:#ededed"></div>
<span style="left:402.30px;top:760.00px;font-size:11px;line-height:15px;color:#000;letter-spacing:0.023px;">Pfirsich-Eistee 0.45l</span>
<span style="left:596.80px;top:760.00px;font-size:11px;line-height:15px;color:#000;letter-spacing:-0.005px;">4.00</span>
<div style="left:400px;top:775px;width:248px;height:16px;background:#f4f4f8"></div>
<div style="left:396px;top:791px;width:366px;height:1px;background:#ededed"></div>
<span style="left:402.30px;top:777.00px;font-size:11px;line-height:15px;color:#000;letter-spacing:0.030px;">Pfirsich-Eistee 1.5l</span>
<span style="left:596.80px;top:777.00px;font-size:11px;line-height:15px;color:#000;letter-spacing:-0.005px;">7.00</span>
<div style="left:396px;top:808px;width:366px;height:1px;background:#ededed"></div>
<span style="left:402.30px;top:794.00px;font-size:11px;line-height:15px;color:#000;letter-spacing:0.086px;">Red Bull 0.25l</span>
<span style="left:596.80px;top:794.00px;font-size:11px;line-height:15px;color:#000;letter-spacing:-0.005px;">4.90</span>
<div style="left:396px;top:825px;width:366px;height:1px;background:#ededed"></div>
<span style="left:402.30px;top:811.00px;font-size:11px;line-height:15px;color:#000;letter-spacing:-0.027px;">Rivella Red 0.45l</span>
<span style="left:596.80px;top:811.00px;font-size:11px;line-height:15px;color:#000;letter-spacing:-0.005px;">4.00</span>
<div style="left:396px;top:842px;width:366px;height:1px;background:#ededed"></div>
<span style="left:402.30px;top:828.00px;font-size:11px;line-height:15px;color:#000;letter-spacing:0.087px;">Sprite 0.45l</span>
<span style="left:596.80px;top:828.00px;font-size:11px;line-height:15px;color:#000;letter-spacing:-0.005px;">4.00</span>
<div style="left:400px;top:843px;width:248px;height:16px;background:#f4f4f8"></div>
<div style="left:396px;top:859px;width:366px;height:1px;background:#ededed"></div>
<span style="left:402.30px;top:845.00px;font-size:11px;line-height:15px;color:#000;letter-spacing:0.106px;">Sprite 1.5l</span>
<span style="left:596.80px;top:845.00px;font-size:11px;line-height:15px;color:#000;letter-spacing:-0.005px;">7.00</span>
<div style="left:396px;top:876px;width:366px;height:1px;background:#ededed"></div>
<span style="left:402.30px;top:862.00px;font-size:11px;line-height:15px;color:#000;letter-spacing:0.206px;">Sprudelndes Mineralwasser 0.5l</span>
<span style="left:596.80px;top:862.00px;font-size:11px;line-height:15px;color:#000;letter-spacing:-0.005px;">4.00</span>
<div style="left:400px;top:877px;width:248px;height:16px;background:#f4f4f8"></div>
<div style="left:396px;top:893px;width:366px;height:1px;background:#ededed"></div>
<span style="left:402.30px;top:879.00px;font-size:11px;line-height:15px;color:#000;letter-spacing:0.206px;">Sprudelndes Mineralwasser 1.5l</span>
<span style="left:596.80px;top:879.00px;font-size:11px;line-height:15px;color:#000;letter-spacing:-0.005px;">7.00</span>
<div style="left:396px;top:910px;width:366px;height:1px;background:#ededed"></div>
<span style="left:402.30px;top:896.00px;font-size:11px;line-height:15px;color:#000;letter-spacing:0.138px;">Stilles Mineralwasser 0.5l</span>
<span style="left:596.80px;top:896.00px;font-size:11px;line-height:15px;color:#000;letter-spacing:-0.005px;">4.00</span>
<div style="left:400px;top:911px;width:248px;height:16px;background:#f4f4f8"></div>
<div style="left:396px;top:927px;width:366px;height:1px;background:#ededed"></div>
<span style="left:402.30px;top:913.00px;font-size:11px;line-height:15px;color:#000;letter-spacing:0.138px;">Stilles Mineralwasser 1.5l</span>
<span style="left:596.80px;top:913.00px;font-size:11px;line-height:15px;color:#000;letter-spacing:-0.005px;">7.00</span>
<div style="left:396px;top:944px;width:366px;height:1px;background:#ededed"></div>
<span style="left:402.30px;top:930.00px;font-size:11px;line-height:15px;color:#000;letter-spacing:0.082px;">Uludag Green, 0.45L</span>
<span style="left:596.80px;top:930.00px;font-size:11px;line-height:15px;color:#000;letter-spacing:-0.005px;">4.00</span>
<div style="left:400px;top:945px;width:248px;height:16px;background:#f4f4f8"></div>
<div style="left:396px;top:961px;width:366px;height:1px;background:#ededed"></div>
<span style="left:402.30px;top:947.00px;font-size:11px;line-height:15px;color:#000;letter-spacing:0.273px;">Uludag Orange 0.45l</span>
<span style="left:596.80px;top:947.00px;font-size:11px;line-height:15px;color:#000;letter-spacing:-0.005px;">4.00</span>
<div style="left:396px;top:978px;width:366px;height:1px;background:#ededed"></div>
<div style="left:396px;top:995px;width:366px;height:1px;background:#ededed"></div>
<div style="left:396px;top:1012px;width:366px;height:1px;background:#ededed"></div>
<div style="left:396px;top:1029px;width:366px;height:1px;background:#ededed"></div>
<div style="left:396px;top:1046px;width:366px;height:1px;background:#ededed"></div>
<div style="left:396px;top:1063px;width:366px;height:1px;background:#ededed"></div>
<div style="left:396px;top:1080px;width:366px;height:1px;background:#ededed"></div>
<div style="left:396px;top:1097px;width:366px;height:1px;background:#ededed"></div>
<div style="left:396px;top:1114px;width:366px;height:1px;background:#ededed"></div>
<div style="left:396px;top:1131px;width:366px;height:1px;background:#ededed"></div>
<div style="left:396px;top:1148px;width:366px;height:1px;background:#ededed"></div>
<div style="left:396px;top:1165px;width:366px;height:1px;background:#ededed"></div>
<div style="left:396px;top:1182px;width:366px;height:1px;background:#ededed"></div>
<div style="left:396px;top:1199px;width:366px;height:1px;background:#ededed"></div>
<div style="left:396px;top:1216px;width:366px;height:1px;background:#ededed"></div>
<div style="left:396px;top:1233px;width:366px;height:1px;background:#ededed"></div>
<div style="left:396px;top:1250px;width:366px;height:1px;background:#ededed"></div>
<div style="left:396px;top:1267px;width:366px;height:1px;background:#ededed"></div>
<div style="left:396px;top:1284px;width:366px;height:1px;background:#ededed"></div>
<div style="left:396px;top:1301px;width:366px;height:1px;background:#ededed"></div>
<div style="left:396px;top:1318px;width:366px;height:1px;background:#ededed"></div>
<div style="left:396px;top:1335px;width:366px;height:1px;background:#ededed"></div>
<div style="left:568px;top:537px;width:1px;height:802px;background:#ededed"></div>
<div style="left:648px;top:537px;width:1px;height:802px;background:#ededed"></div>
<div style="left:388px;top:1345px;width:382px;height:1px;background:#dcdcdc"></div>
<div style="left:779px;top:143px;width:91px;height:23px;background:#fdfdfd;border:1px solid #d0d0d0;border-radius:4px"></div>
<span style="left:797.40px;top:148.00px;font-size:11px;line-height:15px;color:#000;letter-spacing:0.238px;">Neu laden</span>
<div style="left:771px;top:170px;width:1px;height:120px;background:#cfcfcf"></div>
<div style="left:772px;top:170px;width:1px;height:120px;background:#fafafa"></div>
<div style="left:1684px;top:170px;width:1px;height:119px;background:#d9d9d9"></div>
<div style="left:1686px;top:170px;width:1px;height:119px;background:#e6e6e6"></div>
<div style="left:774px;top:288px;width:910px;height:1px;background:#dedede"></div>
<span style="left:784.40px;top:175.00px;font-size:10px;line-height:14px;color:#3d85c6;font-weight:700;letter-spacing:-0.392px;">KONTAKT</span>
<span style="left:1034.70px;top:175.00px;font-size:10px;line-height:14px;color:#3d85c6;font-weight:700;transform:scaleX(0.8747);transform-origin:0 50%;">ADRESSE</span>
<span style="left:1301.50px;top:175.00px;font-size:10px;line-height:14px;color:#3d85c6;font-weight:700;transform:scaleX(0.8783);transform-origin:0 50%;">BESTELLINFO</span>
<span style="left:785.40px;top:195.00px;font-size:11px;line-height:15px;color:#6b6b70;letter-spacing:-0.301px;">Name:</span>
<span style="left:785.40px;top:213.00px;font-size:11px;line-height:15px;color:#6b6b70;">Vorname:</span>
<span style="left:785.40px;top:231.00px;font-size:11px;line-height:15px;color:#6b6b70;letter-spacing:-0.417px;">Tel.:</span>
<span style="left:785.40px;top:249.00px;font-size:11px;line-height:15px;color:#6b6b70;letter-spacing:0.317px;">Mob.:</span>
<span style="left:785.40px;top:267.00px;font-size:11px;line-height:15px;color:#6b6b70;letter-spacing:-0.244px;">Email:</span>
<span style="left:1035.20px;top:193.00px;font-size:11px;line-height:15px;color:#6b6b70;letter-spacing:-0.257px;">Strasse:</span>
<span style="left:1035.20px;top:211.00px;font-size:11px;line-height:15px;color:#6b6b70;letter-spacing:0.239px;">Ort:</span>
<span style="left:1035.20px;top:229.00px;font-size:11px;line-height:15px;color:#6b6b70;letter-spacing:0.048px;">Kommentar:</span>
<span style="left:1302.30px;top:193.00px;font-size:11px;line-height:15px;color:#6b6b70;letter-spacing:0.009px;">Erstellt am::</span>
<span style="left:1302.30px;top:211.00px;font-size:11px;line-height:15px;color:#6b6b70;letter-spacing:0.193px;">Anzahl Bestellung...</span>
<span style="left:1302.30px;top:229.00px;font-size:11px;line-height:15px;color:#6b6b70;letter-spacing:0.147px;">Letzte Bestellung:</span>
<span style="left:1302.30px;top:251.00px;font-size:11px;line-height:15px;color:#6b6b70;letter-spacing:0.365px;">Mindestbestellwert:</span>
<span style="left:1412.40px;top:251.00px;font-size:11px;line-height:15px;color:#222;">-</span>
<div style="left:772px;top:290px;width:913px;height:862px;background:#fff;border:1px solid #7d828c"></div>
<span style="left:780.20px;top:297.00px;font-size:11px;line-height:15px;color:#000;letter-spacing:-0.211px;">Name</span>
<span style="left:1123.60px;top:297.00px;font-size:11px;line-height:15px;color:#000;letter-spacing:0.555px;">Optionen</span>
<span style="left:1246.30px;top:297.00px;font-size:11px;line-height:15px;color:#000;letter-spacing:-0.353px;">Preis</span>
<span style="left:1322.40px;top:297.00px;font-size:11px;line-height:15px;color:#000;letter-spacing:0.392px;">Menge</span>
<span style="left:1460.00px;top:297.00px;font-size:11px;line-height:15px;color:#000;letter-spacing:0.127px;">Kommentar</span>
<div style="left:1081px;top:292px;width:1px;height:23px;background:#e5e5e5"></div>
<div style="left:1082px;top:316px;width:1px;height:835px;background:#ededed"></div>
<div style="left:1213px;top:292px;width:1px;height:23px;background:#e5e5e5"></div>
<div style="left:1214px;top:316px;width:1px;height:835px;background:#ededed"></div>
<div style="left:1301px;top:292px;width:1px;height:23px;background:#e5e5e5"></div>
<div style="left:1302px;top:316px;width:1px;height:835px;background:#ededed"></div>
<div style="left:1378px;top:292px;width:1px;height:23px;background:#e5e5e5"></div>
<div style="left:1379px;top:316px;width:1px;height:835px;background:#ededed"></div>
<div style="left:1598px;top:292px;width:1px;height:23px;background:#e5e5e5"></div>
<div style="left:1599px;top:316px;width:1px;height:835px;background:#ededed"></div>
<div style="left:774px;top:332px;width:909px;height:1px;background:#ededed"></div>
<div style="left:774px;top:349px;width:909px;height:1px;background:#ededed"></div>
<div style="left:774px;top:366px;width:909px;height:1px;background:#ededed"></div>
<div style="left:774px;top:383px;width:909px;height:1px;background:#ededed"></div>
<div style="left:774px;top:400px;width:909px;height:1px;background:#ededed"></div>
<div style="left:774px;top:417px;width:909px;height:1px;background:#ededed"></div>
<div style="left:774px;top:434px;width:909px;height:1px;background:#ededed"></div>
<div style="left:774px;top:451px;width:909px;height:1px;background:#ededed"></div>
<div style="left:774px;top:468px;width:909px;height:1px;background:#ededed"></div>
<div style="left:774px;top:485px;width:909px;height:1px;background:#ededed"></div>
<div style="left:774px;top:502px;width:909px;height:1px;background:#ededed"></div>
<div style="left:774px;top:519px;width:909px;height:1px;background:#ededed"></div>
<div style="left:774px;top:536px;width:909px;height:1px;background:#ededed"></div>
<div style="left:774px;top:553px;width:909px;height:1px;background:#ededed"></div>
<div style="left:774px;top:570px;width:909px;height:1px;background:#ededed"></div>
<div style="left:774px;top:587px;width:909px;height:1px;background:#ededed"></div>
<div style="left:774px;top:604px;width:909px;height:1px;background:#ededed"></div>
<div style="left:774px;top:621px;width:909px;height:1px;background:#ededed"></div>
<div style="left:774px;top:638px;width:909px;height:1px;background:#ededed"></div>
<div style="left:774px;top:655px;width:909px;height:1px;background:#ededed"></div>
<div style="left:774px;top:672px;width:909px;height:1px;background:#ededed"></div>
<div style="left:774px;top:689px;width:909px;height:1px;background:#ededed"></div>
<div style="left:774px;top:706px;width:909px;height:1px;background:#ededed"></div>
<div style="left:774px;top:723px;width:909px;height:1px;background:#ededed"></div>
<div style="left:774px;top:740px;width:909px;height:1px;background:#ededed"></div>
<div style="left:774px;top:757px;width:909px;height:1px;background:#ededed"></div>
<div style="left:774px;top:774px;width:909px;height:1px;background:#ededed"></div>
<div style="left:774px;top:791px;width:909px;height:1px;background:#ededed"></div>
<div style="left:774px;top:808px;width:909px;height:1px;background:#ededed"></div>
<div style="left:774px;top:825px;width:909px;height:1px;background:#ededed"></div>
<div style="left:774px;top:842px;width:909px;height:1px;background:#ededed"></div>
<div style="left:774px;top:859px;width:909px;height:1px;background:#ededed"></div>
<div style="left:774px;top:876px;width:909px;height:1px;background:#ededed"></div>
<div style="left:774px;top:893px;width:909px;height:1px;background:#ededed"></div>
<div style="left:774px;top:910px;width:909px;height:1px;background:#ededed"></div>
<div style="left:774px;top:927px;width:909px;height:1px;background:#ededed"></div>
<div style="left:774px;top:944px;width:909px;height:1px;background:#ededed"></div>
<div style="left:774px;top:961px;width:909px;height:1px;background:#ededed"></div>
<div style="left:774px;top:978px;width:909px;height:1px;background:#ededed"></div>
<div style="left:774px;top:995px;width:909px;height:1px;background:#ededed"></div>
<div style="left:774px;top:1012px;width:909px;height:1px;background:#ededed"></div>
<div style="left:774px;top:1029px;width:909px;height:1px;background:#ededed"></div>
<div style="left:774px;top:1046px;width:909px;height:1px;background:#ededed"></div>
<div style="left:774px;top:1063px;width:909px;height:1px;background:#ededed"></div>
<div style="left:774px;top:1080px;width:909px;height:1px;background:#ededed"></div>
<div style="left:774px;top:1097px;width:909px;height:1px;background:#ededed"></div>
<div style="left:774px;top:1114px;width:909px;height:1px;background:#ededed"></div>
<div style="left:774px;top:1131px;width:909px;height:1px;background:#ededed"></div>
<div style="left:774px;top:1148px;width:909px;height:1px;background:#ededed"></div>
<span style="left:787.60px;top:1172.00px;font-size:12px;line-height:17px;color:#000;font-weight:700;letter-spacing:-0.244px;">Lieferoption</span>
<div style="left:861px;top:1173px;width:108px;height:21px;background:#fff;border:1px solid #d4d4d4;border-radius:3px"></div>
<span style="left:865.30px;top:1177.00px;font-size:11px;line-height:15px;color:#222;letter-spacing:0.258px;">Lieferung</span>
<svg style="left:955px;top:1180.5px" width="10" height="7" viewBox="0 0 10 7"><path d="M0.8 1 L5 5.2 L9.2 1" fill="none" stroke="#333" stroke-width="1"/></svg>
<span style="left:976.60px;top:1175.00px;font-size:12px;line-height:17px;color:#000;font-weight:700;letter-spacing:-0.277px;">Bezahlung:</span>
<div style="left:1044px;top:1173px;width:114px;height:21px;background:#fff;border:1px solid #d4d4d4;border-radius:3px"></div>
<span style="left:1048.60px;top:1177.00px;font-size:11px;line-height:15px;color:#222;letter-spacing:-0.372px;">Cash</span>
<svg style="left:1144px;top:1180.5px" width="10" height="7" viewBox="0 0 10 7"><path d="M0.8 1 L5 5.2 L9.2 1" fill="none" stroke="#333" stroke-width="1"/></svg>
<span style="left:1167.30px;top:1175.00px;font-size:12px;line-height:17px;color:#000;font-weight:700;letter-spacing:-0.210px;">Fahrer</span>
<div style="left:1234px;top:1173px;width:104px;height:21px;background:#fff;border:1px solid #d4d4d4;border-radius:3px"></div>
<span style="left:1238.30px;top:1177.00px;font-size:11px;line-height:15px;color:#222;letter-spacing:0.128px;">Marco</span>
<svg style="left:1324px;top:1180.5px" width="10" height="7" viewBox="0 0 10 7"><path d="M0.8 1 L5 5.2 L9.2 1" fill="none" stroke="#333" stroke-width="1"/></svg>
<span style="left:792.50px;top:1196.00px;font-size:12px;line-height:17px;color:#000;font-weight:700;transform:scaleX(0.9195);transform-origin:0 50%;">Kommentar:</span>
<div style="left:862px;top:1200px;width:295px;height:44px;background:#fff"></div>
<div style="left:862px;top:1244px;width:295px;height:1px;background:#777"></div>
<div style="left:862px;top:1245px;width:295px;height:1px;background:#bdbdbd"></div>
<div style="left:1169px;top:1201px;width:93px;height:21px;background:#fdfdfd;border:1px solid #d0d0d0;border-radius:4px"></div>
<span style="left:1175.00px;top:1205.00px;font-size:11px;line-height:15px;color:#111;letter-spacing:0.344px;">Zeitbestellung:</span>
<div style="left:785px;top:1247px;width:68px;height:75px;background:#fdfdfd;border:1px solid #d0d0d0;border-radius:4px"></div>
<div style="left:861px;top:1247px;width:68px;height:75px;background:#fdfdfd;border:1px solid #d0d0d0;border-radius:4px"></div>
<div style="left:937px;top:1247px;width:68px;height:75px;background:#fdfdfd;border:1px solid #d0d0d0;border-radius:4px"></div>
<div style="left:1013px;top:1247px;width:68px;height:75px;background:#fdfdfd;border:1px solid #d0d0d0;border-radius:4px"></div>
<div style="left:1089px;top:1247px;width:68px;height:75px;background:#f8f8f8;border-radius:4px"></div>
<svg style="left:800.5px;top:1256px" width="36.5" height="36" viewBox="0 0 38 38">
<defs><radialGradient id="rg" cx=".5" cy=".35" r=".75"><stop offset="0" stop-color="#e8322a"/><stop offset="1" stop-color="#b8130f"/></radialGradient></defs>
<circle cx="19" cy="19" r="18.3" fill="#c21a12" stroke="#a5140e" stroke-width=".8"/><path d="M1.2 19 A17.8 17.8 0 0 1 36.8 19 Z" fill="#da271d"/><rect x="6.5" y="15.6" width="25" height="6.6" fill="#fff"/></svg>
<span style="left:801.16px;top:1293.00px;font-size:11px;line-height:15px;color:#111;letter-spacing:-0.281px;">Lösche</span>
<span style="left:803.85px;top:1306.00px;font-size:11px;line-height:15px;color:#111;letter-spacing:-0.309px;">Artikel</span>
<svg style="left:879.7px;top:1254.6px" width="41.2" height="38.11" viewBox="0 0 40 37">
<path d="M2.5 1.5 H21 L28.5 9 V36.5 H2.5 Z" fill="#fdfdfd" stroke="#cdcdcd" stroke-width="1"/>
<path d="M21 1.5 V9 H28.5 Z" fill="#ececec" stroke="#cdcdcd" stroke-width="1" stroke-linejoin="round"/>
<rect x="5" y="17.5" width="21" height="17" fill="#ececec"/>
<rect x="21.2" y="27" width="5.3" height="12" rx="1.8" fill="#e0521b" stroke="#b03d0f" stroke-width=".6"/>
<rect x="26.5" y="23.1" width="5.5" height="16" rx="1.8" fill="#a5cf3e" stroke="#7ea125" stroke-width=".6"/>
<rect x="32" y="31.9" width="5.2" height="7" rx="1.8" fill="#48aee6" stroke="#2a86bd" stroke-width=".6"/>
</svg>
<span style="left:867.54px;top:1293.00px;font-size:11px;line-height:15px;color:#111;letter-spacing:0.173px;">Bestellübe</span>
<span style="left:880.72px;top:1306.00px;font-size:11px;line-height:15px;color:#111;letter-spacing:0.136px;">rsicht</span>
<svg style="left:953px;top:1255px" width="38" height="40" viewBox="0 0 38 40">
<path d="M2.4 5.2 L34.6 2.2 L35 32 L2.4 37.4 Z" fill="#c6c6ca" stroke="#c6c6ca" stroke-width="2.2" stroke-linejoin="round"/>
<path d="M4 5 L34.8 2 L35.2 30.6 L4 35.6 Z" fill="#ececef" stroke="#ececef" stroke-width="1.6" stroke-linejoin="round"/>
<path d="M16 8.4 L25 7.5 L25 9.3 L16 10.2 Z" fill="#f43c2c"/>
<path d="M17.6 13 L24.4 12 L26 21.4 L21.4 22.6 L18 20 Z" fill="#fdfdfd" stroke="#c9c9cc" stroke-width=".9" stroke-linejoin="round"/>
<text x="21" y="30.6" font-family="Liberation Serif" font-weight="700" font-size="8.8" fill="#ee1020" stroke="#ee1020" stroke-width=".75" text-anchor="middle" transform="rotate(-10 21 27.5)">SALE</text>
</svg>
<span style="left:953.42px;top:1298.00px;font-size:11px;line-height:15px;color:#111;letter-spacing:0.146px;">Rabatt</span>
<svg style="left:1028px;top:1257.5px" width="42" height="36" viewBox="0 0 42 38">
<defs><linearGradient id="bb" x1="0" y1="0" x2="0" y2="1"><stop offset="0" stop-color="#74c5ee"/><stop offset=".5" stop-color="#68bde9"/><stop offset=".5" stop-color="#5bb0de"/><stop offset="1" stop-color="#55a9d8"/></linearGradient></defs>
<path d="M19 2.5 C29 2.5 37 8.5 37 16.5 C37 24.5 29 30.5 19 30.5 C16.8 30.5 14.6 30.2 12.6 29.6 C10.5 32 7.8 33.2 5 33.4 C6.6 31.6 7.4 29.4 7.2 27 C3.4 24.4 1 20.8 1 16.5 C1 8.5 9 2.5 19 2.5 Z" fill="url(#bb)" stroke="#2c86c0" stroke-width="1"/>
<path d="M24.5 27 H30 V21.5 H35.5 V27 H41 V32.5 H35.5 V38 H30 V32.5 H24.5 Z" fill="#c6e05c" stroke="#8aaa20" stroke-width=".9"/>
</svg>
<span style="left:1034.33px;top:1293.00px;font-size:11px;line-height:15px;color:#111;letter-spacing:-0.338px;">Extra</span>
<span style="left:1030.29px;top:1306.00px;font-size:11px;line-height:15px;color:#111;letter-spacing:0.277px;">Artikel</span>
<svg style="left:1104.5px;top:1256px" width="37" height="36.1" viewBox="0 0 40 39">
<rect x="8.6" y="0.6" width="22.8" height="13.5" fill="#e8e8e8" stroke="#c2c2c2" stroke-width="1"/>
<rect x="0.8" y="12.4" width="38.4" height="20.6" rx="2.5" fill="#cbcbcb" stroke="#b4b4b4" stroke-width="1"/>
<path d="M7 13.4 H33 V20.5 Q33 24.4 29 24.4 H11 Q7 24.4 7 20.5 Z" fill="#8f8f8f"/>
<rect x="7" y="13.4" width="26" height="3.4" fill="#a4a4a4"/>
<rect x="8.6" y="29.8" width="22.8" height="8.6" fill="#eeeeee" stroke="#bcbcbc" stroke-width="1"/>
<circle cx="35.8" cy="16.2" r="1" fill="#f2f2f2"/>
</svg>
<span style="left:1095.74px;top:1293.00px;font-size:11px;line-height:15px;color:#a3a3a3;letter-spacing:0.283px;">Bestellung</span>
<span style="left:1101.72px;top:1306.00px;font-size:11px;line-height:15px;color:#a3a3a3;letter-spacing:0.237px;">drucken</span>
<span style="left:1222.20px;top:1244.00px;font-size:20px;line-height:28px;color:#000;font-weight:700;letter-spacing:-0.299px;">Total</span>
<div style="left:1162px;top:1272px;width:175px;height:49px;background:#fff;border:1px solid #4a4a4a"></div>
<svg style="left:1276px;top:774px" width="16" height="23" viewBox="0 0 16 23"><path d="M2.3 2.3 V18 L6.6 15 L9.2 20.6 L11.8 19.5 L9.5 14.3 L13.8 13.8 Z" fill="#fff" stroke="#1b1b26" stroke-width="1.1" stroke-linejoin="round"/></svg>
<div style="left:0px;top:1348px;width:1709px;height:39px;background:#d7e4f2"></div>
<div style="left:387px;top:1347px;width:1322px;height:1px;background:#a0a0a0"></div>
<span style="left:-1.00px;top:1360.00px;font-size:12px;line-height:17px;color:#000;letter-spacing:0.020px;">ISDN Kontroller nicht erkannt</span>
<div style="left:159px;top:1351px;width:1px;height:33px;background:#a9b4c0"></div>
<div style="left:160px;top:1351px;width:1px;height:33px;background:#fff"></div>
<div style="left:163px;top:1351px;width:1px;height:33px;background:#a9b4c0"></div>
<div style="left:164px;top:1351px;width:1px;height:33px;background:#fff"></div>
<span style="left:170.50px;top:1353.00px;font-size:12px;line-height:17px;color:#000;letter-spacing:-0.377px;">MyPizzaSIP Status: Verbunden</span>
<div style="left:331px;top:1351px;width:1px;height:33px;background:#a9b4c0"></div>
<div style="left:332px;top:1351px;width:1px;height:33px;background:#fff"></div>
<span style="left:336.50px;top:1360.00px;font-size:12px;line-height:17px;color:#000;letter-spacing:-0.460px;">Kunden:</span>
<span style="left:387.00px;top:1360.00px;font-size:12px;line-height:17px;color:#000;letter-spacing:0.070px;">97</span>
<div style="left:1704px;top:1374px;width:2px;height:2px;background:#8f9399"></div>
<div style="left:1700px;top:1378px;width:2px;height:2px;background:#8f9399"></div>
<div style="left:1704px;top:1378px;width:2px;height:2px;background:#8f9399"></div>
<div style="left:1696px;top:1382px;width:2px;height:2px;background:#8f9399"></div>
<div style="left:1700px;top:1382px;width:2px;height:2px;background:#8f9399"></div>
<div style="left:1704px;top:1382px;width:2px;height:2px;background:#8f9399"></div>
</div></body></html>
